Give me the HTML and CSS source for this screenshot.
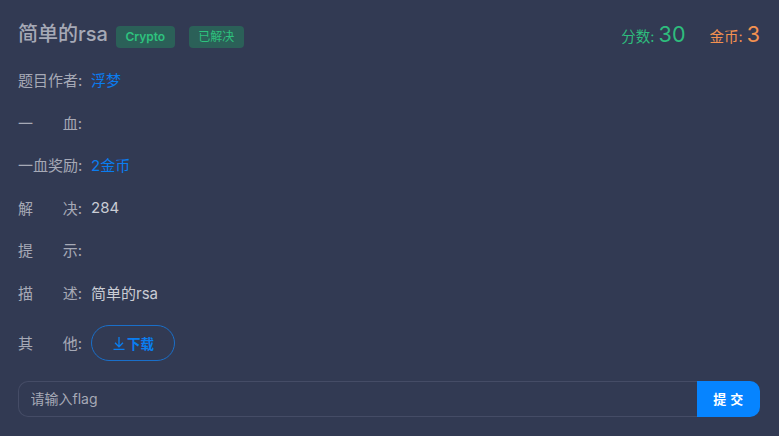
FILE: index.html

```html
<!DOCTYPE html>
<html lang="zh-CN">
<head>
<meta charset="UTF-8" />
<title>简单的rsa</title>
<link rel="stylesheet" href="styles.css">
</head>
<body>

<div class="panel">
  <div class="head">
    <div class="title-box">
      <span class="title">简单的rsa</span>
      <span class="tag tag-type">Crypto</span>
      <span class="tag tag-solved">已解决</span>
    </div>
    <div class="scores">
      <span class="score green">分数: <b>30</b></span>
      <span class="score orange">金币: <b>3</b></span>
    </div>
  </div>

  <div class="row"><span class="label"><i>题目作者:</i></span><span class="val link">浮梦</span></div>
  <div class="row"><span class="label"><i>一</i><i>血:</i></span></div>
  <div class="row"><span class="label"><i>一血奖励:</i></span><span class="val link">2金币</span></div>
  <div class="row"><span class="label"><i>解</i><i>决:</i></span><span class="val">284</span></div>
  <div class="row"><span class="label"><i>提</i><i>示:</i></span></div>
  <div class="row"><span class="label"><i>描</i><i>述:</i></span><span class="val">简单的rsa</span></div>
  <div class="row row-btn">
    <span class="label"><i>其</i><i>他:</i></span>
    <button class="dl-btn">
      <svg class="dl-icon" width="14" height="14" viewBox="0 0 14 14" fill="none" stroke="currentColor" stroke-width="1.3">
        <path d="M7 1v9.5M3 6.8l4 4 4-4M1.500 13.300h11" />
      </svg>下载
    </button>
  </div>

  <div class="flag-form">
    <input class="flag-input" type="text" placeholder="请输入flag" />
    <button class="submit">提 交</button>
  </div>
</div>

</body>
</html>
```

FILE: styles.css

```css
* {
  box-sizing: border-box;
}
body {
  margin: 0;
  background: #323a53;
  font-family: Inter, "Noto Sans CJK SC", sans-serif;
  color: #c9ccd4;
}
.panel {
  padding: 20px 19px 0 18px;
}

/* Title row */
.head {
  display: flex;
  justify-content: space-between;
  align-items: center;
  height: 29px;
}
.title-box {
  display: flex;
  align-items: center;
}
.title {
  font-size: 20px;
  font-weight: 500;
  color: #a6a9b6;
  margin-right: 8px;
  margin-top: -4px;
}
.tag {
  display: inline-block;
  height: 22px;
  line-height: 22px;
  padding: 0 9.500px;
  margin-top: 5px;
  font-size: 12px;
  border-radius: 4px;
  background: #2b6058;
  color: #2ec27e;
}
.tag-type {
  font-weight: 600;
  margin-right: 14px;
}
.scores {
  display: flex;
  gap: 24px;
  align-items: baseline;
  font-size: 14.500px;
  margin-bottom: 2px;
}
.score b {
  font-size: 21.500px;
  font-weight: 400;
}
.green { color: #2ebd7d; }
.orange { color: #f39150; }

/* Info rows */
.row {
  display: flex;
  align-items: center;
  height: 20px;
  margin-top: 22.500px;
  font-size: 15px;
}
.head + .row {
  margin-top: 20.500px;
}
.label {
  display: flex;
  justify-content: space-between;
  width: 64px;
  margin-right: 9px;
  color: #a6a9b6;
  white-space: nowrap;
}
.label i {
  font-style: normal;
}
.val {
  color: #c9ccd4;
}
.link {
  color: #0a7df0;
}
.row-btn {
  height: 36px;
}
.dl-btn {
  display: flex;
  align-items: center;
  justify-content: center;
  width: 84px;
  height: 36px;
  border: 1px solid #1a6fc9;
  border-radius: 18px;
  background: transparent;
  color: #0a7df0;
  font-family: inherit;
  font-size: 13.500px;
  font-weight: 700;
}
.dl-icon {
  margin-right: 1px;
}

/* Flag form */
.flag-form {
  display: flex;
  height: 36px;
  margin-top: 20px;
}
.flag-input {
  flex: 1;
  min-width: 0;
  padding: 0 11.500px;
  border: 1px solid #454c66;
  border-right: none;
  border-radius: 10px 0 0 10px;
  background: transparent;
  font-family: inherit;
  font-size: 14px;
  color: #c9ccd4;
}
.flag-input::placeholder {
  color: #a6a9b6;
}
.submit {
  width: 63px;
  border: none;
  border-radius: 0 10px 10px 0;
  background: #0684ff;
  color: #fff;
  font-family: inherit;
  font-size: 13px;
  font-weight: 700;
  letter-spacing: 0.500px;
}
```
